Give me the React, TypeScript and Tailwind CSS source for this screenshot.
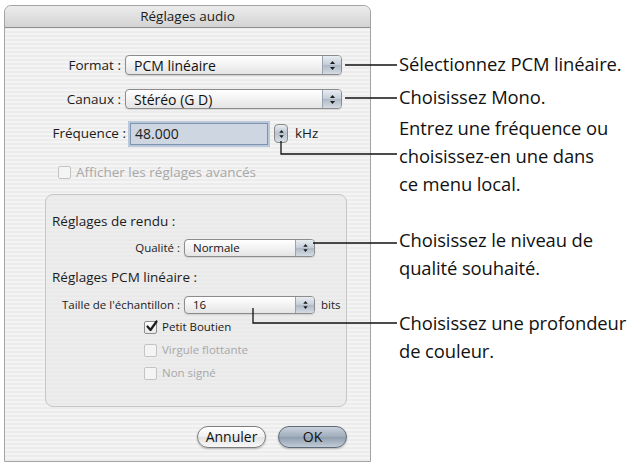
import React from 'react'

const ui = "font-['Open_Sans','Liberation_Sans',sans-serif]"

function Arrows({ small }: { small?: boolean }) {
  return (
    <svg width="7" height={small ? 10 : 11} viewBox="0 0 7 11" className="block">
      <path d="M3.5 1 L6 4 H1 Z" fill="#1a1a1a" />
      <path d="M3.5 10 L6 7 H1 Z" fill="#1a1a1a" />
    </svg>
  )
}

function Popup({ value, w, small }: { value: string; w: string; small?: boolean }) {
  return (
    <div
      className={`flex ${w} ${small ? 'h-[18px]' : 'h-[20px]'} items-stretch overflow-hidden rounded-[4px] border border-[#8c8c8c] bg-[linear-gradient(#ffffff,#f1f1f1_55%,#e4e4e4)] shadow-[0_1px_1px_rgba(0,0,0,0.12)]`}
    >
      <div className={`flex flex-1 items-center pl-[8px] ${small ? 'text-[11.5px]' : 'text-[14px]'} text-[#111]`}>{value}</div>
      <div className="flex w-[19px] items-center justify-center border-l border-[#9aa3ae] bg-[linear-gradient(#e9edf2,#c3ccd7_50%,#aeb9c6_51%,#d4dbe3)]">
        <Arrows small={small} />
      </div>
    </div>
  )
}

function Check({ checked, disabled, label, small }: { checked?: boolean; disabled?: boolean; label: string; small?: boolean }) {
  return (
    <div className="flex h-[14px] items-center gap-[5px]">
      <div
        className={`relative h-[13px] w-[13px] rounded-[2px] border ${disabled ? 'border-[#c4c4c4] bg-[#f4f4f4]' : 'border-[#8e8e8e] bg-[linear-gradient(#ffffff,#e8e8e8)]'}`}
      >
        {checked && (
          <svg width="13" height="13" viewBox="0 0 13 13" className="absolute left-[0px] top-[-2px]">
            <path d="M2.5 6.5 L5.5 10 L11.5 1.5" fill="none" stroke="#1d1d1d" strokeWidth="2.2" strokeLinecap="round" strokeLinejoin="round" />
          </svg>
        )}
      </div>
      <span className={`${small ? 'text-[11.5px]' : 'text-[13.5px]'} ${disabled ? 'text-[#a8a8a8]' : 'text-[#1a1a1a]'}`}>{label}</span>
    </div>
  )
}

function AquaButton({ label, primary, w }: { label: string; primary?: boolean; w: string }) {
  return (
    <div
      className={`flex ${w} h-[22px] items-center justify-center rounded-full border ${
        primary
          ? 'border-[#5f6b78] bg-[linear-gradient(#c9d2dc,#9eabba_50%,#8f9dad_51%,#c2ccd7)]'
          : 'border-[#7d7d7d] bg-[linear-gradient(#ffffff,#f0f0f0_50%,#e2e2e2_51%,#f8f8f8)]'
      } text-[14px] text-[#111] shadow-[0_1px_2px_rgba(0,0,0,0.25)]`}
    >
      {label}
    </div>
  )
}

export default function App() {
  return (
    <div className="relative flex h-[467px] w-[632px] overflow-hidden bg-white">
      {/* dialog */}
      <div
        className={`${ui} ml-[4px] mt-[5px] flex h-[457px] w-[367px] flex-col rounded-t-[7px] border border-[#a3a3a3] bg-[repeating-linear-gradient(0deg,#ececec_0px,#ececec_2px,#f4f4f4_2px,#f4f4f4_4px)]`}
      >
        <div className="flex h-[22px] items-center justify-center rounded-t-[7px] border-b border-[#8f8f8f] bg-[linear-gradient(#ececec,#d3d3d3)] text-[13.5px] text-[#1b1b1b]">
          Réglages audio
        </div>

        <div className="flex flex-col text-[13.5px] text-[#1b1b1b]">
          <div className="mt-[27px] flex items-center">
            <div className="w-[120px] pr-[4px] text-right">Format :</div>
            <Popup value="PCM linéaire" w="w-[217px]" />
          </div>
          <div className="mt-[14px] flex items-center">
            <div className="w-[120px] pr-[4px] text-right">Canaux :</div>
            <Popup value="Stéréo (G D)" w="w-[217px]" />
          </div>
          <div className="mt-[13px] flex items-center">
            <div className="w-[125px] pr-[4px] text-right">Fréquence :</div>
            <div className="flex h-[22px] w-[138px] items-center border border-[#7f93ad] bg-[#cdd6e1] pl-[4px] text-[14px] text-[#222] shadow-[0_0_0_2px_#b9c8da]">
              48.000
            </div>
            <div className="ml-[6px] flex h-[19px] w-[14px] items-center justify-center rounded-[4px] border border-[#8a8a8a] bg-[linear-gradient(#e9edf2,#b9c3cf_50%,#d8dee6)]">
              <Arrows small />
            </div>
            <span className="ml-[7px]">kHz</span>
          </div>
          <div className="ml-[53px] mt-[21px]">
            <Check disabled label="Afficher les réglages avancés" />
          </div>

          {/* group box */}
          <div className="ml-[40px] mt-[14px] flex h-[213px] w-[302px] flex-col rounded-[8px] border border-[#c6c6c6] bg-[#e7e7e7]/60 pl-[6px]">
            <div className="mt-[16px]">Réglages de rendu :</div>
            <div className="mt-[8px] flex items-center">
              <div className="w-[132px] pr-[4px] text-right text-[11.5px]">Qualité :</div>
              <Popup value="Normale" w="w-[131px]" small />
            </div>
            <div className="mt-[10px]">Réglages PCM linéaire :</div>
            <div className="mt-[9px] flex items-center">
              <div className="w-[132px] pr-[4px] text-right text-[11.5px]">Taille de l'échantillon :</div>
              <Popup value="16" w="w-[131px]" small />
              <span className="ml-[6px] text-[11.5px]">bits</span>
            </div>
            <div className="ml-[92px] mt-[6px] flex flex-col gap-[9px]">
              <Check checked small label="Petit Boutien" />
              <Check disabled small label="Virgule flottante" />
              <Check disabled small label="Non signé" />
            </div>
          </div>

          <div className="mt-[19px] flex justify-end gap-[12px] pr-[23px]">
            <AquaButton label="Annuler" w="w-[69px]" />
            <AquaButton label="OK" primary w="w-[69px]" />
          </div>
        </div>
      </div>

      {/* callouts */}
      <div className="ml-[28px] flex flex-col pt-[50px] font-['Open_Sans','Liberation_Sans',sans-serif] text-[18.4px] leading-[28px] tracking-[-0.1px] text-[#111]">
        <div>Sélectionnez PCM linéaire.</div>
        <div className="mt-[5px]">Choisissez Mono.</div>
        <div className="mt-[3px]">
          Entrez une fréquence ou
          <br />
          choisissez-en une dans
          <br />
          ce menu local.
        </div>
        <div className="mt-[28px]">
          Choisissez le niveau de
          <br />
          qualité souhaité.
        </div>
        <div className="mt-[27px]">
          Choisissez une profondeur
          <br />
          de couleur.
        </div>
      </div>

      {/* leader lines */}
      <svg className="pointer-events-none absolute left-0 top-0" width="632" height="467" viewBox="0 0 632 467">
        <g fill="none" stroke="#111" strokeWidth="1.3">
          <path d="M345 65 H397" />
          <path d="M345 98 H397" />
          <path d="M281 141 V154 H397" />
          <path d="M313 243 H397" />
          <path d="M253 308 V323 H397" />
        </g>
      </svg>
    </div>
  )
}
